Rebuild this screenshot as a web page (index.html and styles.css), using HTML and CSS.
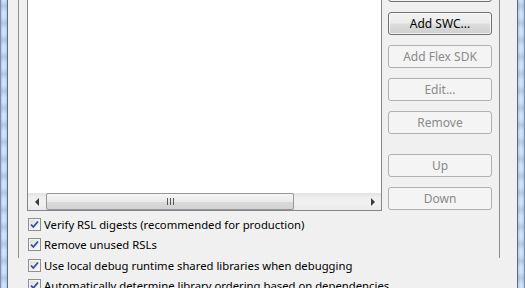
FILE: index.html
```html
<!DOCTYPE html>
<html lang="en">

<head>
    <meta charset="UTF-8">
    <title>Library path</title>
    <link rel="stylesheet" href="styles.css">
</head>

<body>
    <div class="frame frame-left"></div>
    <div class="dialog">
        <div class="panel">
            <div class="top">
                <div class="list">
                    <div class="list-body"></div>
                    <div class="hscroll">
                        <div class="arrow arrow-left"></div>
                        <div class="track">
                            <div class="thumb"><span class="grip"></span></div>
                        </div>
                        <div class="arrow arrow-right"></div>
                    </div>
                </div>
                <div class="buttons">
                    <button class="btn" aria-label="Add Project"></button>
                    <button class="btn">Add SWC...</button>
                    <button class="btn" disabled>Add Flex SDK</button>
                    <button class="btn" disabled>Edit...</button>
                    <button class="btn" disabled>Remove</button>
                    <button class="btn btn-gap" disabled>Up</button>
                    <button class="btn" disabled>Down</button>
                </div>
            </div>
            <ul class="checks">
                <li class="check"><span class="box"></span>Verify RSL digests (recommended for production)</li>
                <li class="check"><span class="box"></span>Remove unused RSLs</li>
                <li class="check"><span class="box"></span>Use local debug runtime shared libraries when debugging</li>
                <li class="check"><span class="box"></span>Automatically determine library ordering based on dependencies</li>
            </ul>
        </div>
    </div>
    <div class="frame frame-right"></div>
</body>

</html>
```

FILE: styles.css
```css
* {
    margin: 0;
    padding: 0;
    list-style: none;
    box-sizing: border-box;
}

body {
    width: 525px;
    height: 288px;
    overflow: hidden;
    display: flex;
    font-family: "Noto Sans", "Open Sans", sans-serif;
    font-size: 11px;
    color: #000;
    background: #f0f0f0;
}

/* window glass */
.frame {
    width: 8px;
    flex: none;
    background:
        repeating-linear-gradient(180deg, rgba(60, 90, 130, 0) 0, rgba(60, 90, 130, 0.18) 6px, rgba(60, 90, 130, 0) 12px, rgba(60, 90, 130, 0) 17px),
        linear-gradient(90deg, #b4cfee, #d6e8fa 50%, #b4cfee);
}

.frame-left {
    border-left: 1px solid #7d93ad;
    border-right: 1px solid #5b6c80;
}

.frame-right {
    border-left: 1px solid #5b6c80;
    border-right: 1px solid #7d93ad;
}

.dialog {
    flex: 1;
    padding: 0 17px 0 10px;
    background: #f0f0f0;
}

.panel {
    height: 100%;
    border-left: 1px solid #8d8d8d;
    border-right: 1px solid #8d8d8d;
    padding: 0 7px 0 8px;
}

.top {
    display: flex;
    gap: 6px;
    margin-top: -30px;
}

.list {
    width: 355px;
    height: 241px;
    border: 1px solid #828790;
    background: #fff;
    display: flex;
    flex-direction: column;
}

.list-body {
    flex: 1;
}

.hscroll {
    height: 17px;
    display: flex;
    background: linear-gradient(180deg, #e3e3e3, #f0f0f0 30%, #f0f0f0 70%, #e8e8e8);
}

.arrow {
    width: 17px;
    position: relative;
}

.arrow::after {
    content: "";
    position: absolute;
    top: 5px;
    left: 6px;
    border: 4px solid transparent;
}

.arrow-left::after {
    left: 3px;
    border-right-color: #3c3c3c;
}

.arrow-right::after {
    left: 7px;
    border-left-color: #3c3c3c;
}

.track {
    flex: 1;
    padding: 0 0 0 1px;
}

.thumb {
    width: 248px;
    height: 17px;
    border: 1px solid #979797;
    border-radius: 2px;
    background: linear-gradient(180deg, #f6f6f6, #e9e9e9 50%, #dadada 51%, #d2d2d2);
    display: flex;
    align-items: center;
    justify-content: center;
}

.grip {
    width: 7px;
    height: 7px;
    background: repeating-linear-gradient(90deg, #565656 0, #565656 1px, transparent 1px, transparent 3px);
}

.buttons {
    width: 104px;
    padding-top: 9px;
    display: flex;
    flex-direction: column;
    gap: 10px;
}

.btn {
    height: 23px;
    font: inherit;
    font-size: 12px;
    color: #000;
    border: 1px solid #707070;
    border-radius: 3px;
    background: linear-gradient(180deg, #f2f2f2, #ebebeb 48%, #dddddd 52%, #cfcfcf);
    box-shadow: inset 0 0 0 1px rgba(255, 255, 255, 0.75);
}

.btn:disabled {
    color: #8a8a8a;
    border-color: #adb2b5;
    background: #f4f4f4;
    box-shadow: none;
}

.btn-gap {
    margin-top: 10px;
}

.checks {
    margin-top: 3px;
    padding-left: 1px;
}

.check {
    height: 20.5px;
    display: flex;
    align-items: center;
    gap: 3px;
    font-size: 11.3px;
    white-space: nowrap;
}

.box {
    width: 13px;
    height: 13px;
    flex: none;
    border: 1px solid #8e8f8f;
    background:
        url("data:image/svg+xml,%3Csvg xmlns='http://www.w3.org/2000/svg' width='11' height='11'%3E%3Cpath d='M2 5.5 L4.3 8 L9 2.5' fill='none' stroke='%23324f9c' stroke-width='1.8'/%3E%3C/svg%3E") center no-repeat,
        linear-gradient(135deg, #dcdcdc, #fbfbfb);
    box-shadow: inset 0 0 0 1px #f4f4f4;
}
```
